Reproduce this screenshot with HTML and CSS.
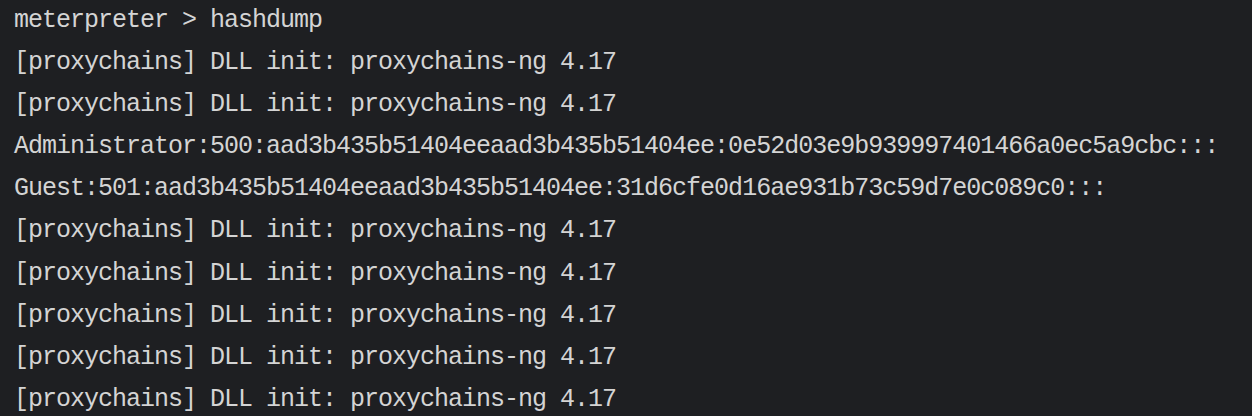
FILE: index.html
```html
<!DOCTYPE html>
<html>
<head>
<meta charset="utf-8">
<link rel="stylesheet" href="styles.css">
</head>
<body>
<div class="term">
<div class="line">meterpreter &gt; hashdump</div>
<div class="line">[proxychains] DLL init: proxychains-ng 4.17</div>
<div class="line">[proxychains] DLL init: proxychains-ng 4.17</div>
<div class="line">Administrator:500:aad3b435b51404eeaad3b435b51404ee:0e52d03e9b939997401466a0ec5a9cbc:::</div>
<div class="line">Guest:501:aad3b435b51404eeaad3b435b51404ee:31d6cfe0d16ae931b73c59d7e0c089c0:::</div>
<div class="line">[proxychains] DLL init: proxychains-ng 4.17</div>
<div class="line">[proxychains] DLL init: proxychains-ng 4.17</div>
<div class="line">[proxychains] DLL init: proxychains-ng 4.17</div>
<div class="line">[proxychains] DLL init: proxychains-ng 4.17</div>
<div class="line">[proxychains] DLL init: proxychains-ng 4.17</div>
</div>
</body>
</html>
```
FILE: styles.css
```css
html, body {
  margin: 0;
  padding: 0;
  background: #1e1f22;
  overflow: hidden;
}
.term {
  padding: 0 0 0 14px;
  font-family: "Liberation Mono", "DejaVu Sans Mono", monospace;
  font-size: 25px;
  letter-spacing: -1px;
  line-height: 42.1px;
  color: #d4d4d4;
}
.line {
  height: 42.1px;
  white-space: pre;
}
```
